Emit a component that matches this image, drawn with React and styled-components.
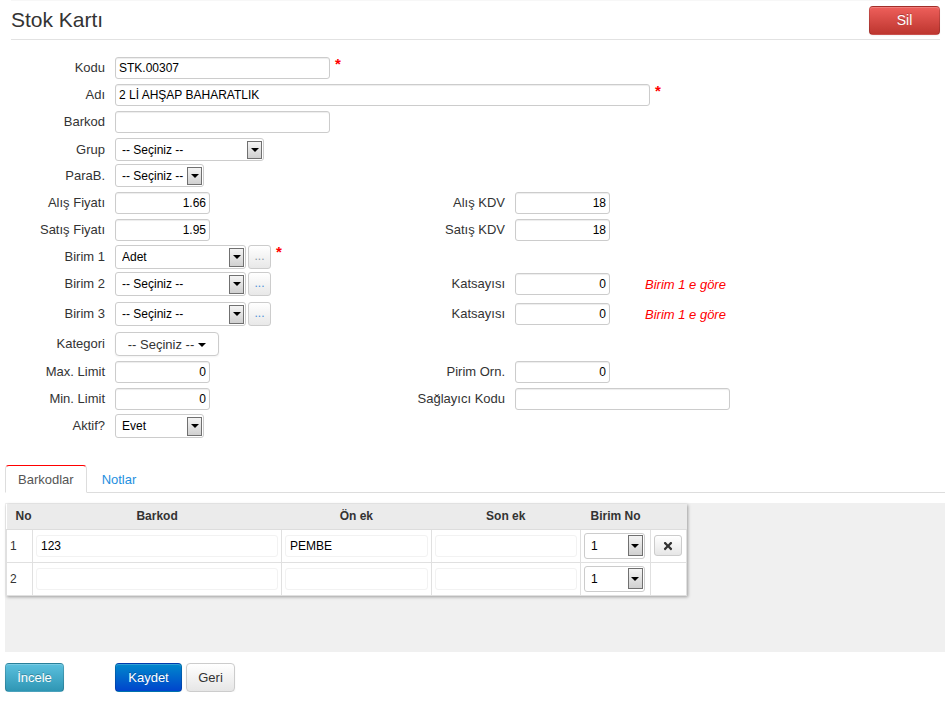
import React from 'react'
import styled, { createGlobalStyle } from 'styled-components'
import { FaTimes } from 'react-icons/fa'

const Global = createGlobalStyle`
    body{
        margin:0;
        background:#fff;
        font-family:"Liberation Sans", Arial, sans-serif;
        font-size:12px;
        color:#333;
    }
    *{ box-sizing:border-box; }
`

const Header = styled.div`
    display:flex;
    justify-content:space-between;
    align-items:center;
    height:40px;
    margin:0 12px 0 11px;
    border-bottom:1px solid #e2e2e2;
    border-top:1px solid #f7f7f7;
    h1{
        margin:0;
        font-size:21px;
        font-weight:normal;
        color:#333;
    }
`

const Btn = styled.button`
    height:29px;
    width:${p => p.w}px;
    border-radius:4px;
    font-family:"Liberation Sans", Arial, sans-serif;
    cursor:pointer;
    border:1px solid ${p => p.kind === 'default' ? '#ccc' : 'rgba(0,0,0,.15)'};
    color:${p => p.kind === 'default' ? '#333' : '#fff'};
    text-shadow:${p => p.kind === 'default' ? 'none' : '0 -1px 0 rgba(0,0,0,.25)'};
    box-shadow:inset 0 1px 0 rgba(255,255,255,.2), 0 1px 2px rgba(0,0,0,.05);
    background:${p => ({
        danger: 'linear-gradient(#ee5f5b,#bd362f)',
        info: 'linear-gradient(#5bc0de,#2f96b4)',
        primary: 'linear-gradient(#0088cc,#0044cc)',
        default: 'linear-gradient(#ffffff,#e6e6e6)',
    })[p.kind]};
    font-size:${p => p.big ? 14 : 13}px;
    margin-left:${p => p.gap || 0}px;
`

const Form = styled.div`
    margin-top:17px;
`

const Row = styled.div`
    display:grid;
    grid-template-columns:105px 275px 105px 1fr;
    column-gap:10px;
    align-items:start;
    height:${p => p.h || 27}px;
`

const Label = styled.div`
    text-align:right;
    font-size:13px;
    line-height:${p => p.lh || 22}px;
    color:#333;
    white-space:nowrap;
`

const Field = styled.div`
    display:flex;
    align-items:center;
    grid-column:${p => p.span ? '2 / -1' : 'auto'};
    height:${p => p.lh || 22}px;
`

const Input = styled.input`
    height:22px;
    width:${p => p.w}px;
    border:1px solid #ccc;
    border-radius:3px;
    padding:0 3px;
    font-family:"Liberation Sans", Arial, sans-serif;
    font-size:12px;
    color:#000;
    text-align:${p => p.num ? 'right' : 'left'};
    box-shadow:inset 0 1px 1px rgba(0,0,0,.075);
    outline:none;
`

const Star = styled.span`
    color:#f00;
    font-weight:bold;
    font-size:15px;
    margin-left:5px;
    align-self:flex-start;
    margin-top:-2px;
`

const SelBox = styled.div`
    display:flex;
    align-items:center;
    width:${p => p.w}px;
    height:${p => p.h || 23}px;
    border:1px solid #ccc;
    border-radius:3px;
    background:#fff;
    padding:0 1px 0 6px;
    font-size:12px;
    color:#000;
    span{ flex:1; white-space:nowrap; overflow:hidden; }
`

const Arrow = styled.div`
    width:15px;
    height:calc(100% - 3px);
    border:1px solid #707070;
    background:linear-gradient(#f4f4f4,#d0d0d0);
    display:flex;
    align-items:center;
    justify-content:center;
    &::after{
        content:"";
        border-left:4px solid transparent;
        border-right:4px solid transparent;
        border-top:4px solid #000;
    }
`

const Dots = styled.button`
    width:23px;
    height:24px;
    margin-left:2px;
    border:1px solid #ccc;
    border-radius:3px;
    background:linear-gradient(#fff,#e8e8e8);
    color:${p => p.muted ? '#8a9aa8' : '#4a90d9'};
    font-size:12px;
    line-height:1;
    padding:0 0 2px;
    font-family:"Liberation Sans", Arial, sans-serif;
`

const Hint = styled.span`
    color:#f00;
    font-style:italic;
    font-size:13px;
    margin-left:35px;
    white-space:nowrap;
`

const DropBtn = styled.button`
    width:104px;
    height:24px;
    border:1px solid #ccc;
    border-radius:4px;
    background:#fff;
    font-family:"Liberation Sans", Arial, sans-serif;
    font-size:13px;
    color:#333;
    box-shadow:0 1px 2px rgba(0,0,0,.05);
    &::after{
        content:"";
        display:inline-block;
        margin-left:4px;
        vertical-align:middle;
        border-left:4px solid transparent;
        border-right:4px solid transparent;
        border-top:4px solid #000;
    }
`

const Tabs = styled.div`
    display:flex;
    margin:27px 7px 0 5px;
    border-bottom:1px solid #ddd;
    height:28px;
`

const Tab = styled.div`
    height:28px;
    padding:0 12px;
    line-height:27px;
    font-size:13px;
    border-radius:4px 4px 0 0;
    color:${p => p.active ? '#555' : '#1e8fe0'};
    background:${p => p.active ? '#fff' : 'transparent'};
    border:1px solid ${p => p.active ? '#ddd' : 'transparent'};
    border-top-color:${p => p.active ? '#f00' : 'transparent'};
    border-bottom-color:${p => p.active ? '#fff' : 'transparent'};
    margin-right:2px;
`

const Panel = styled.div`
    margin:10px 7px 0 5px;
    height:149px;
    background:#f0f0f0;
    padding:1px;
`

const Table = styled.table`
    width:681px;
    border-collapse:collapse;
    background:#fff;
    box-shadow:1px 1px 3px rgba(0,0,0,.35);
    th{
        height:25px;
        background:#ebebeb;
        font-size:12px;
        font-weight:bold;
        color:#333;
        border-bottom:1px solid #ddd;
        text-align:center;
    }
    td{
        height:33px;
        border:1px solid #e0e0e0;
        padding:0 3px;
        font-size:12px;
    }
`

const Cell = styled.input`
    width:100%;
    height:22px;
    border:1px solid #f2f2f2;
    border-radius:3px;
    padding:0 4px;
    font-family:"Liberation Sans", Arial, sans-serif;
    font-size:12px;
    color:#000;
    outline:none;
`

const XBtn = styled.button`
    width:28px;
    height:21px;
    border:1px solid #ccc;
    border-radius:3px;
    background:linear-gradient(#fff,#e6e6e6);
    display:flex;
    align-items:center;
    justify-content:center;
    color:#333;
    padding:0;
`

const Footer = styled.div`
    display:flex;
    margin:11px 0 0 5px;
    gap:4px;
`

function Select({ w, h, value }) {
    return (
        <SelBox w={w} h={h}>
            <span>{value}</span>
            <Arrow />
        </SelBox>
    )
}

export default function App() {
    const rows = [
        { no: 1, barkod: '123', on: 'PEMBE', del: true },
        { no: 2, barkod: '', on: '', del: false },
    ]

    return (
        <>
            <Global />
            <Header>
                <h1>Stok Kartı</h1>
                <Btn kind="danger" w={71} big>Sil</Btn>
            </Header>

            <Form>
                <Row>
                    <Label>Kodu</Label>
                    <Field><Input w={215} defaultValue="STK.00307" /><Star>*</Star></Field>
                </Row>
                <Row>
                    <Label>Adı</Label>
                    <Field span><Input w={535} defaultValue="2 Lİ AHŞAP BAHARATLIK" /><Star>*</Star></Field>
                </Row>
                <Row>
                    <Label>Barkod</Label>
                    <Field><Input w={215} /></Field>
                </Row>
                <Row h={26}>
                    <Label lh={23}>Grup</Label>
                    <Field lh={23}><Select w={149} value="-- Seçiniz --" /></Field>
                </Row>
                <Row h={28}>
                    <Label lh={23}>ParaB.</Label>
                    <Field lh={23}><Select w={89} value="-- Seçiniz --" /></Field>
                </Row>
                <Row>
                    <Label>Alış Fiyatı</Label>
                    <Field><Input w={95} num defaultValue="1.66" /></Field>
                    <Label>Alış KDV</Label>
                    <Field><Input w={95} num defaultValue="18" /></Field>
                </Row>
                <Row h={26}>
                    <Label>Satış Fiyatı</Label>
                    <Field><Input w={95} num defaultValue="1.95" /></Field>
                    <Label>Satış KDV</Label>
                    <Field><Input w={95} num defaultValue="18" /></Field>
                </Row>
                <Row>
                    <Label lh={24}>Birim 1</Label>
                    <Field lh={24}><Select w={131} h={24} value="Adet" /><Dots muted>...</Dots><Star>*</Star></Field>
                </Row>
                <Row h={30}>
                    <Label lh={24}>Birim 2</Label>
                    <Field lh={24}><Select w={131} h={24} value="-- Seçiniz --" /><Dots>...</Dots></Field>
                    <Label lh={24}>Katsayısı</Label>
                    <Field lh={24}><Input w={95} num defaultValue="0" /><Hint>Birim 1 e göre</Hint></Field>
                </Row>
                <Row h={30}>
                    <Label lh={24}>Birim 3</Label>
                    <Field lh={24}><Select w={131} h={24} value="-- Seçiniz --" /><Dots>...</Dots></Field>
                    <Label lh={24}>Katsayısı</Label>
                    <Field lh={24}><Input w={95} num defaultValue="0" /><Hint>Birim 1 e göre</Hint></Field>
                </Row>
                <Row h={29}>
                    <Label lh={24}>Kategori</Label>
                    <Field lh={24}><DropBtn>-- Seçiniz --</DropBtn></Field>
                </Row>
                <Row>
                    <Label>Max. Limit</Label>
                    <Field><Input w={95} num defaultValue="0" /></Field>
                    <Label>Pirim Orn.</Label>
                    <Field><Input w={95} num defaultValue="0" /></Field>
                </Row>
                <Row h={26}>
                    <Label>Min. Limit</Label>
                    <Field><Input w={95} num defaultValue="0" /></Field>
                    <Label>Sağlayıcı Kodu</Label>
                    <Field><Input w={215} /></Field>
                </Row>
                <Row h={24}>
                    <Label lh={24}>Aktif?</Label>
                    <Field lh={24}><Select w={89} h={24} value="Evet" /></Field>
                </Row>
            </Form>

            <Tabs>
                <Tab active>Barkodlar</Tab>
                <Tab>Notlar</Tab>
            </Tabs>

            <Panel>
                <Table>
                    <colgroup>
                        <col style={{ width: 25 }} />
                        <col style={{ width: 250 }} />
                        <col style={{ width: 150 }} />
                        <col style={{ width: 150 }} />
                        <col style={{ width: 70 }} />
                        <col style={{ width: 36 }} />
                    </colgroup>
                    <thead>
                        <tr>
                            <th style={{ textAlign: 'left', paddingLeft: 9 }}>No</th>
                            <th>Barkod</th>
                            <th>Ön ek</th>
                            <th>Son ek</th>
                            <th>Birim No</th>
                            <th></th>
                        </tr>
                    </thead>
                    <tbody>
                        {rows.map(r => (
                            <tr key={r.no}>
                                <td>{r.no}</td>
                                <td><Cell defaultValue={r.barkod} /></td>
                                <td><Cell defaultValue={r.on} /></td>
                                <td><Cell /></td>
                                <td><Select w={61} h={26} value="1" /></td>
                                <td>{r.del && <XBtn><FaTimes size={12} /></XBtn>}</td>
                            </tr>
                        ))}
                    </tbody>
                </Table>
            </Panel>

            <Footer>
                <Btn kind="info" w={59}>İncele</Btn>
                <Btn kind="primary" w={67} gap={47}>Kaydet</Btn>
                <Btn kind="default" w={49}>Geri</Btn>
            </Footer>
        </>
    )
}
